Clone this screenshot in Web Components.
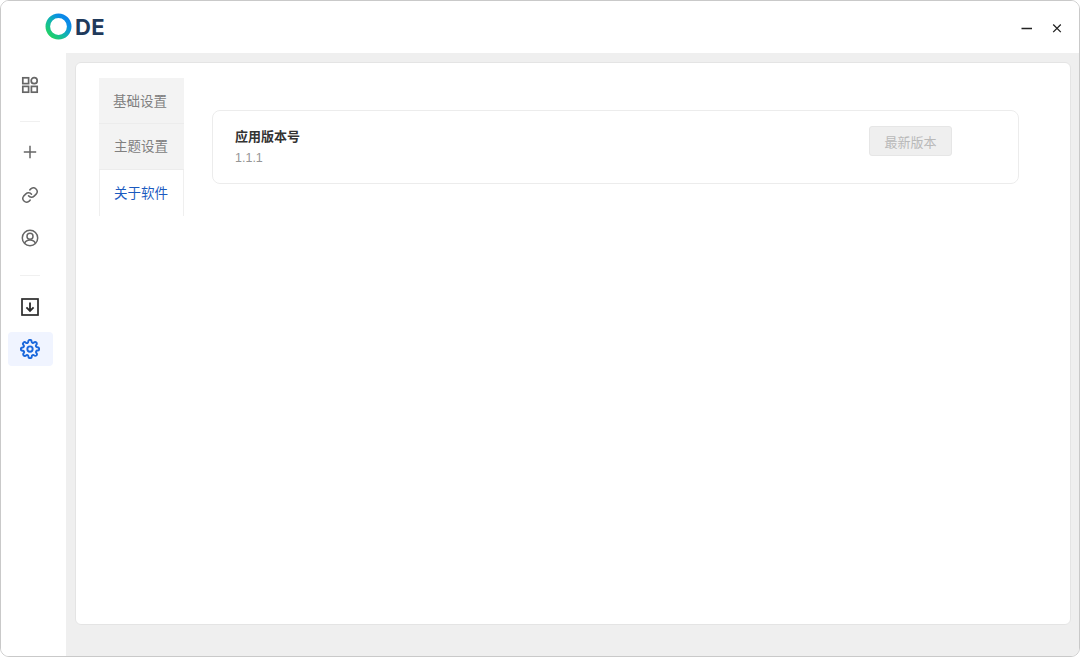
<!DOCTYPE html>
<html lang="zh">
<head>
<meta charset="utf-8">
<title>ODE</title>
<style>
    html,body{margin:0;height:100%;background:#fff;}
    body{font-family:"Liberation Sans","Noto Sans CJK SC",sans-serif;}
</style>
</head>
<body>
<app-window>
    <title-bar slot="top"></title-bar>
    <side-nav slot="side"></side-nav>
    <settings-panel></settings-panel>
</app-window>

<script>
class AppWindow extends HTMLElement{
    constructor(){
        super();
        this.attachShadow({mode:'open'}).innerHTML = `
        <style>
            :host{
                display:flex;
                flex-direction:column;
                box-sizing:border-box;
                width:1080px;
                height:657px;
                border:1px solid #c9c9c9;
                border-radius:9px;
                overflow:hidden;
                background:#fff;
            }
            .body{display:flex;flex:1;min-height:0;}
            .main{
                flex:1;
                min-width:0;
                display:flex;
                box-sizing:border-box;
                padding:9px 8px 31px 9px;
                background:#efefef;
            }
        </style>
        <slot name="top"></slot>
        <div class="body">
            <slot name="side"></slot>
            <div class="main"><slot></slot></div>
        </div>
        `
    }
}

class TitleBar extends HTMLElement{
    constructor(){
        super();
        this.attachShadow({mode:'open'}).innerHTML = `
        <style>
            :host{
                display:flex;
                align-items:center;
                height:52px;
                flex:none;
                padding:0 15px 0 44px;
                background:#fff;
            }
            .logo{display:flex;align-items:center;gap:3px;margin-top:-1px;}
            .logo span{
                font:700 22px/26px "Inter","Liberation Sans",sans-serif;
                letter-spacing:.4px;
                color:#1f3a5c;
            }
            .controls{margin-left:auto;display:flex;gap:16px;margin-top:1px;}
            svg{display:block;}
        </style>
        <div class="logo">
            <svg width="27" height="27" viewBox="0 0 27 27">
                <defs>
                    <linearGradient id="ring" x1=".1" y1=".9" x2=".9" y2=".1">
                        <stop offset="0" stop-color="#1fd06a"/>
                        <stop offset=".45" stop-color="#10b4b0"/>
                        <stop offset=".8" stop-color="#0a8fe4"/>
                        <stop offset="1" stop-color="#0a86ea"/>
                    </linearGradient>
                </defs>
                <circle cx="13.5" cy="13.5" r="10.7" fill="none" stroke="url(#ring)" stroke-width="4.6"/>
            </svg>
            <span>DE</span>
        </div>
        <div class="controls">
            <svg width="14" height="14" viewBox="0 0 14 14"><path d="M1.500 7.500h10.500" stroke="#222" stroke-width="1.300"/></svg>
            <svg width="14" height="14" viewBox="0 0 14 14"><path d="M3.200 3.500l7.600 7.600M10.800 3.500l-7.600 7.600" stroke="#222" stroke-width="1.300"/></svg>
        </div>
        `
    }
}

class SideNav extends HTMLElement{
    constructor(){
        super();
        this.attachShadow({mode:'open'}).innerHTML = `
        <style>
            :host{
                display:flex;
                flex-direction:column;
                align-items:center;
                box-sizing:border-box;
                flex:none;
                width:65px;
                padding:15px 7px 0 0;
                background:#fff;
            }
            .item{
                box-sizing:border-box;
                width:45px;
                height:34px;
                flex:none;
                display:flex;
                align-items:center;
                justify-content:center;
                border-radius:4px;
                color:#666;
            }
            .item.gap{margin-top:9px;}
            .item.dark{color:#333;}
            .item.active{background:#f0f4ff;color:#1a68dc;margin-top:8px;}
            .line{width:20px;height:1px;background:#f0f0f0;margin:19px 0 13px;}
            .line.b{margin:20px 0 14px;}
            svg{display:block;}
        </style>
        <div class="item">
            <svg width="18" height="18" viewBox="0 0 18 18" fill="none" stroke="currentColor" stroke-width="1.700">
                <rect x="1.800" y="1.800" width="5.800" height="5.800"/>
                <circle cx="13.200" cy="4.700" r="3"/>
                <rect x="1.800" y="10.400" width="5.800" height="5.800"/>
                <rect x="10.400" y="10.400" width="5.800" height="5.800"/>
            </svg>
        </div>
        <div class="line"></div>
        <div class="item">
            <svg width="18" height="18" viewBox="0 0 18 18" fill="none" stroke="currentColor" stroke-width="1.500">
                <path d="M9 2.800v12.400M2.800 9h12.400"/>
            </svg>
        </div>
        <div class="item gap">
            <svg width="18" height="18" viewBox="0 0 24 24" fill="none" stroke="currentColor" stroke-width="2" stroke-linecap="round" stroke-linejoin="round">
                <path d="M10 13a5 5 0 0 0 7.500.5l3-3a5 5 0 0 0-7-7l-1.700 1.700"/>
                <path d="M14 11a5 5 0 0 0-7.500-.5l-3 3a5 5 0 0 0 7 7l1.700-1.700"/>
            </svg>
        </div>
        <div class="item gap">
            <svg width="18" height="18" viewBox="0 0 18 18" fill="none" stroke="currentColor" stroke-width="1.500">
                <circle cx="9" cy="9" r="7.700"/>
                <circle cx="9" cy="7.200" r="3"/>
                <path d="M3.600 14.400c1-2.400 3-3.300 5.400-3.300s4.400.9 5.400 3.300"/>
            </svg>
        </div>
        <div class="line b"></div>
        <div class="item dark">
            <svg width="18" height="18" viewBox="0 0 18 18" fill="none" stroke="#2b2b2b">
                <rect x="1" y="1" width="16" height="16" stroke-width="1.700"/>
                <path d="M9 4.500v8.300M5.400 9.300L9 12.900l3.600-3.600" stroke-width="1.800"/>
            </svg>
        </div>
        <div class="item active">
            <svg width="20" height="20" viewBox="0 0 24 24" fill="none" stroke="currentColor" stroke-width="2.300" stroke-linejoin="round">
                <circle cx="12" cy="12" r="3.200"/>
                <path d="M19.400 15a1.650 1.650 0 0 0 .33 1.820l.06.06a2 2 0 1 1-2.830 2.830l-.06-.06a1.650 1.650 0 0 0-2.800 1.170V21a2 2 0 0 1-4 0v-.09a1.650 1.650 0 0 0-2.800-1.170l-.06.06a2 2 0 1 1-2.830-2.830l.06-.06a1.650 1.650 0 0 0-1.170-2.800H3a2 2 0 0 1 0-4h.09a1.650 1.650 0 0 0 1.170-2.800l-.06-.06a2 2 0 1 1 2.830-2.830l.06.06a1.650 1.650 0 0 0 2.800-1.170V3a2 2 0 0 1 4 0v.09a1.650 1.650 0 0 0 2.800 1.170l.06-.06a2 2 0 1 1 2.830 2.830l-.06.06a1.650 1.650 0 0 0 1.170 2.800H21a2 2 0 0 1 0 4h-.09a1.650 1.650 0 0 0-1.510 1z"/>
            </svg>
        </div>
        `
    }
}

class SettingsPanel extends HTMLElement{
    constructor(){
        super();
        this.attachShadow({mode:'open'}).innerHTML = `
        <style>
            :host{
                display:flex;
                flex:1;
                align-items:flex-start;
                box-sizing:border-box;
                padding:15px 51px 0 23px;
                background:#fff;
                border:1px solid #e4e4e4;
                border-radius:6px;
                font-family:"Liberation Sans","Noto Sans CJK SC",sans-serif;
            }
            .tabs{flex:none;width:85px;display:flex;flex-direction:column;}
            .tab{
                box-sizing:border-box;
                height:46px;
                padding:0 3px 1px 0;
                display:flex;
                align-items:center;
                justify-content:center;
                font-size:13.500px;
                color:#808080;
                background:#f3f3f3;
                border-bottom:1px solid #ececec;
            }
            .tab + .tab{padding:0 1px 3px 0;}
            .tab.on{
                height:46px;
                padding:0 1px 2px 0;
                color:#1a5abf;
                background:#fff;
                border:1px solid #efefef;
                border-width:0 1px;
            }
            .content{flex:1;min-width:0;margin:32px 0 0 28px;}
            .row{
                box-sizing:border-box;
                height:74px;
                display:flex;
                align-items:center;
                padding:0 66px 0 22px;
                border:1px solid #ececec;
                border-radius:8px;
            }
            .name{font-size:13px;font-weight:700;color:#333;line-height:20px;}
            .ver{font-size:12.500px;color:#969696;line-height:20px;margin-top:1px;}
            button{
                margin-left:auto;
                margin-bottom:12px;
                box-sizing:border-box;
                width:83px;
                height:30px;
                font:13px "Liberation Sans","Noto Sans CJK SC",sans-serif;
                color:#b9b9b9;
                background:#efefef;
                border:1px solid #e6e6e6;
                border-radius:3px;
            }
        </style>
        <div class="tabs">
            <div class="tab">基础设置</div>
            <div class="tab">主题设置</div>
            <div class="tab on">关于软件</div>
        </div>
        <div class="content">
            <div class="row">
                <div>
                    <div class="name">应用版本号</div>
                    <div class="ver">1.1.1</div>
                </div>
                <button disabled>最新版本</button>
            </div>
        </div>
        `
    }
}

customElements.define('app-window',AppWindow)
customElements.define('title-bar',TitleBar)
customElements.define('side-nav',SideNav)
customElements.define('settings-panel',SettingsPanel)
</script>
</body>
</html>
